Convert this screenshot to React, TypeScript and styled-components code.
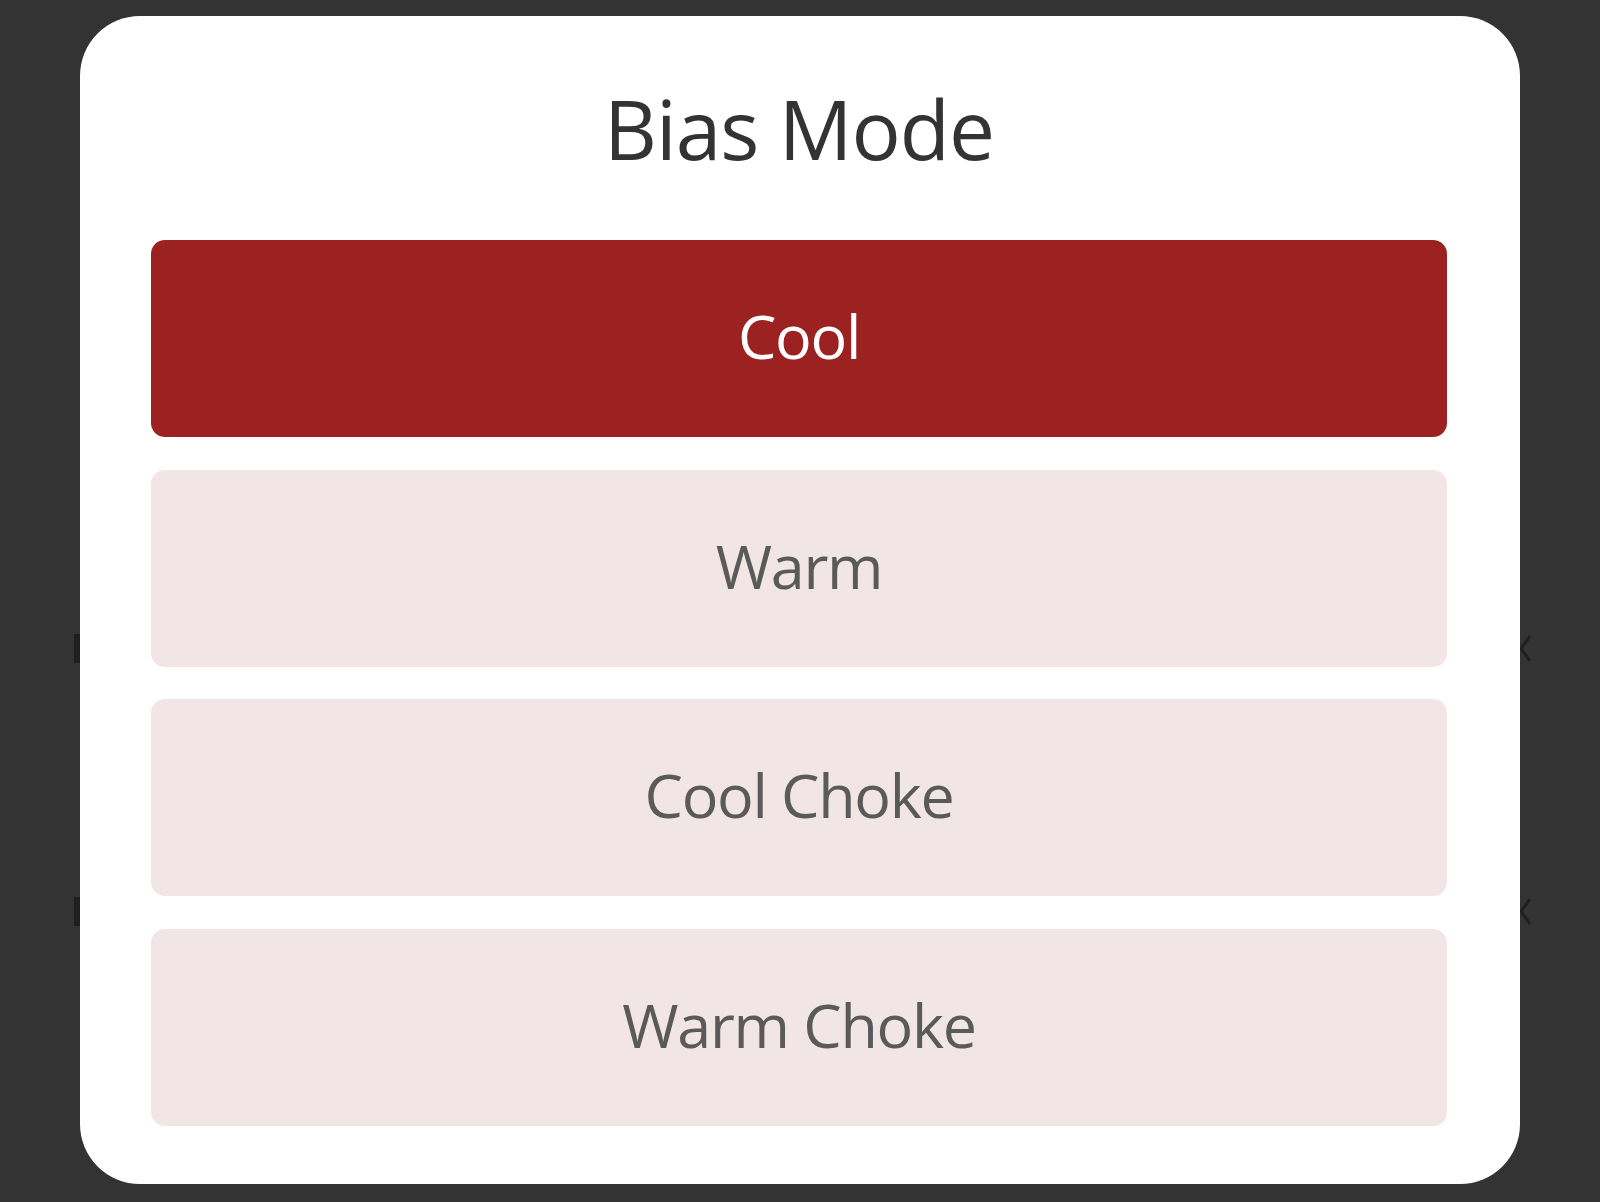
import { useState } from 'react';
import styled, { createGlobalStyle } from 'styled-components';

const GlobalStyle = createGlobalStyle`
  html, body {
    margin: 0;
    padding: 0;
    background: #333333;
  }
  body {
    font-family: "Open Sans", "Noto Sans", sans-serif;
  }
`;

const modes = ['Cool', 'Warm', 'Cool Choke', 'Warm Choke'];

const StyledPage = styled.div`
  position: relative;
  width: 1600px;
  height: 1202px;
  background: #333333;
  overflow: hidden;
`;

const StyledBehindList = styled.div`
  display: flex;
  flex-direction: column;
  gap: 234px;
  padding: 634px 68px 0 74px;
`;

const StyledBehindRow = styled.div`
  display: flex;
  justify-content: space-between;
  align-items: center;
  height: 29px;
`;

const StyledBehindMark = styled.span`
  width: 7px;
  height: 29px;
  background: #1f1f1f;
`;

const StyledBehindChevron = styled.svg`
  width: 14px;
  height: 29px;
  color: #1f1f1f;
`;

const StyledOverlay = styled.div`
  position: absolute;
  inset: 0;
  display: flex;
  align-items: center;
  justify-content: center;
`;

const StyledDialog = styled.div`
  width: 1440px;
  height: 1168px;
  box-sizing: border-box;
  padding: 71px 73px 0 71px;
  background: #ffffff;
  border-radius: 60px;
  display: flex;
  flex-direction: column;
  margin-top: -2px;
`;

const StyledTitle = styled.h2`
  margin: 0 0 71px;
  text-align: center;
  color: #333333;
  font-size: 82px;
  line-height: 82px;
  letter-spacing: -1px;
  font-weight: 400;
`;

const StyledOptionList = styled.div`
  display: flex;
  flex-direction: column;
  gap: 32.5px;
`;

const StyledOption = styled.button<{ $active: boolean }>`
  height: 197px;
  padding: 0 0 6px;
  border: none;
  border-radius: 14px;
  background: ${(props) => (props.$active ? '#9c2222' : '#f2e5e6')};
  color: ${(props) => (props.$active ? '#ffffff' : '#5a5a5a')};
  font-family: "Open Sans", "Noto Sans", sans-serif;
  font-size: 61px;
  letter-spacing: -1.3px;
  font-weight: 400;
  cursor: pointer;
`;

export default function App() {
  const [mode, setMode] = useState('Cool');

  return (
    <StyledPage>
      <GlobalStyle />
      <StyledBehindList>
        {[0, 1].map((row) => (
          <StyledBehindRow key={row}>
            <StyledBehindMark />
            <StyledBehindChevron viewBox="0 0 14 29" fill="none">
              <path d="M12 2 L3 14.5 L12 27" stroke="currentColor" strokeWidth="3" />
            </StyledBehindChevron>
          </StyledBehindRow>
        ))}
      </StyledBehindList>
      <StyledOverlay>
        <StyledDialog>
          <StyledTitle>Bias Mode</StyledTitle>
          <StyledOptionList>
            {modes.map((item) => (
              <StyledOption
                key={item}
                $active={item === mode}
                onClick={() => setMode(item)}
              >
                {item}
              </StyledOption>
            ))}
          </StyledOptionList>
        </StyledDialog>
      </StyledOverlay>
    </StyledPage>
  );
}
